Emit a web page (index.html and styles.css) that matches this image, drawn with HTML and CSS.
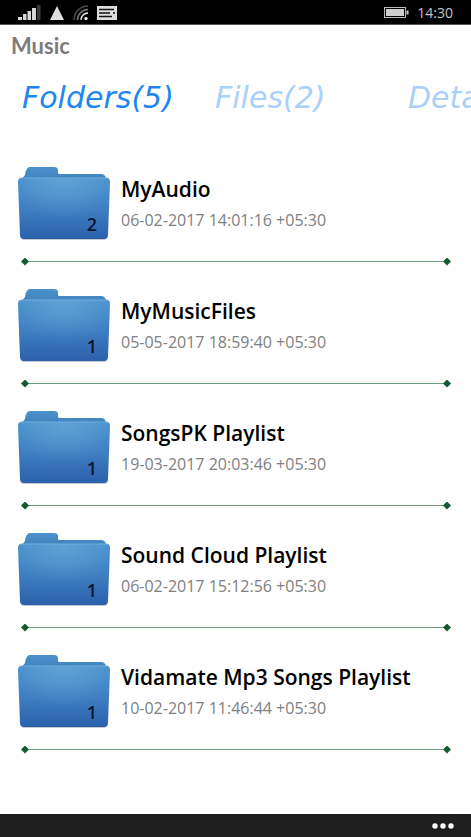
FILE: index.html
```html
<!DOCTYPE html>
<html lang="en">
<head>
<meta charset="utf-8">
<meta name="viewport" content="width=device-width, initial-scale=1">
<title>Music</title>
<link rel="stylesheet" href="styles.css">
</head>
<body>
<svg class="defs" aria-hidden="true">
  <defs>
    <linearGradient id="front" x1="0" y1="0" x2="0" y2="1">
      <stop offset="0" stop-color="#4a90cb"/>
      <stop offset="0.5" stop-color="#3f7fc2"/>
      <stop offset="1" stop-color="#2b60ac"/>
    </linearGradient>
    <radialGradient id="shine" cx="0.5" cy="0.05" r="0.6">
      <stop offset="0" stop-color="#6cb0de" stop-opacity="0.6"/>
      <stop offset="1" stop-color="#6cb0de" stop-opacity="0"/>
    </radialGradient>
    <linearGradient id="back" x1="0" y1="0" x2="0" y2="1">
      <stop offset="0" stop-color="#4c92cb"/>
      <stop offset="1" stop-color="#3a7ab6"/>
    </linearGradient>
  </defs>
  <symbol id="folder" viewBox="0 0 94 74">
    <rect x="4" y="66" width="86" height="8" rx="3" fill="#a9aeb8" opacity="0.7"/>
    <path d="M4 14 L8 9 Q9 1 13 1 H37 Q41 1 41 4 V7 Q41 8 43 8 H84 Q88 8 89 12 L91 20 H4Z" fill="url(#back)"/>
    <path d="M4 12 H90 Q93 12 93 16 L91 69 Q91 73 87 73 H7 Q3 73 3 69 L1 16 Q1 12 4 12Z" fill="url(#front)"/>
    <path d="M4 12 H90 Q93 12 93 16 L91 69 Q91 73 87 73 H7 Q3 73 3 69 L1 16 Q1 12 4 12Z" fill="url(#shine)"/>
    <path d="M2 13 Q3 12 5 12 H89 Q91 12 92 13" fill="none" stroke="#70b0dc"/>
  </symbol>
</svg>
<div class="status">
  <div class="status-icons">
    <svg width="23" height="16" viewBox="0 0 23 16" fill="#d6d6d6" aria-label="Signal"><path d="M0 12h4v3H0zM5 9h3.500v6H5zM9.500 6H13v9H9.500zM14 3h4v12h-4z"/><path d="M19 0h3.500v15H19z" fill="#3c3c3c"/></svg>
    <svg width="14" height="16" viewBox="0 0 14 16" aria-label="Data"><path d="M7 1l7 14H0z" fill="#e0e0e0"/></svg>
    <svg width="15" height="16" viewBox="0 0 15 16" fill="none" stroke-width="1.500" aria-label="Wi-Fi"><path d="M1 15A14 14 0 0 1 15 1" stroke="#4a4a4a"/><path d="M4.500 15A10.500 10.500 0 0 1 15 4.500" stroke="#777"/><path d="M8 15A7 7 0 0 1 15 8" stroke="#e8e8e8"/><circle cx="13" cy="13.500" r="1.600" fill="#fff"/></svg>
    <svg width="20" height="16" viewBox="0 0 20 16" aria-label="Message"><path d="M0 1h20v14H0z" fill="#dcdcdc"/><path d="M2 4.500h15M2 8h11M2 11.500h13M16 8h2" stroke="#111" stroke-width="1.500"/></svg>
  </div>
  <div class="status-right">
    <svg width="25" height="12" viewBox="0 0 25 12" aria-label="Battery"><rect x="0.500" y="0.500" width="21" height="10" fill="none" stroke="#bbb"/><path d="M2 2h18v7H2zM22.500 3.500h2v4h-2z" fill="#cfcfcf"/></svg>
    <time>14:30</time>
  </div>
</div>
<header>
  <h1>Music</h1>
  <nav class="tabs">
    <button class="tab active" type="button">Folders(5)</button>
    <button class="tab" type="button">Files(2)</button>
    <button class="tab" type="button">Details</button>
  </nav>
</header>
<main>
  <ul class="list">
    <li class="row">
      <div class="item"><div class="folder"><svg width="94" height="74"><use href="#folder"/></svg><span class="count">2</span></div>
      <div class="info"><h2>MyAudio</h2><p>06-02-2017 14:01:16 +05:30</p></div></div>
      <div class="divider"></div>
    </li>
    <li class="row">
      <div class="item"><div class="folder"><svg width="94" height="74"><use href="#folder"/></svg><span class="count">1</span></div>
      <div class="info"><h2>MyMusicFiles</h2><p>05-05-2017 18:59:40 +05:30</p></div></div>
      <div class="divider"></div>
    </li>
    <li class="row">
      <div class="item"><div class="folder"><svg width="94" height="74"><use href="#folder"/></svg><span class="count">1</span></div>
      <div class="info"><h2>SongsPK Playlist</h2><p>19-03-2017 20:03:46 +05:30</p></div></div>
      <div class="divider"></div>
    </li>
    <li class="row">
      <div class="item"><div class="folder"><svg width="94" height="74"><use href="#folder"/></svg><span class="count">1</span></div>
      <div class="info"><h2>Sound Cloud Playlist</h2><p>06-02-2017 15:12:56 +05:30</p></div></div>
      <div class="divider"></div>
    </li>
    <li class="row">
      <div class="item"><div class="folder"><svg width="94" height="74"><use href="#folder"/></svg><span class="count">1</span></div>
      <div class="info"><h2>Vidamate Mp3 Songs Playlist</h2><p>10-02-2017 11:46:44 +05:30</p></div></div>
      <div class="divider"></div>
    </li>
  </ul>
</main>
<footer>
  <button class="more" type="button" aria-label="More"><svg width="22" height="6" viewBox="0 0 22 6" fill="#fff"><circle cx="3" cy="3" r="2.700"/><circle cx="11" cy="3" r="2.700"/><circle cx="19" cy="3" r="2.700"/></svg></button>
</footer>
</body>
</html>
```
FILE: styles.css
```css
* { box-sizing: border-box; margin: 0; padding: 0; }
body {
  display: flex;
  flex-direction: column;
  min-height: 100vh;
  background: #fff;
  color: #000;
  font-family: "Segoe UI", "Open Sans", "Noto Sans", sans-serif;
}
svg { display: block; }
button { border: 0; background: none; font: inherit; color: inherit; }
.defs { position: absolute; width: 0; height: 0; }
.status {
  display: flex;
  justify-content: space-between;
  align-items: center;
  height: 25px;
  padding: 2px 18px 0;
  background: #000;
  border-bottom: 1px solid #555;
}
.status-icons { display: flex; gap: 9px; }
.status-right {
  display: flex;
  align-items: center;
  gap: 8px;
  color: #c4c4c4;
  font-size: 14px;
  line-height: 20px;
}
h1 {
  padding: 8px 11px 0;
  color: #7c7c7c;
  font-family: "Comic Sans MS", Lato, sans-serif;
  font-size: 22px;
  font-weight: 700;
  line-height: 26px;
}
.tabs {
  display: grid;
  grid-auto-flow: column;
  grid-auto-columns: 193px;
  padding: 19px 0 0 22px;
  overflow: hidden;
}
.tab {
  color: #a9d0f8;
  font-family: "Comic Sans MS", "DejaVu Sans", sans-serif;
  font-size: 30px;
  font-style: italic;
  font-weight: 400;
  line-height: 40px;
  text-align: left;
}
.tab.active { color: #1c86f2; }
main { flex: 1; padding-top: 32px; }
.list { list-style: none; }
.row { padding: 16px 0 5px; }
.item { display: flex; gap: 10px; padding-left: 17px; }
.folder { position: relative; }
.count {
  position: absolute;
  right: 14px;
  bottom: 4px;
  color: #06152c;
  font-size: 18px;
  font-weight: 600;
  line-height: 24px;
}
.info { padding-top: 8px; }
h2 { font-size: 21px; font-weight: 600; line-height: 30px; }
.info p { color: #808080; font-size: 16px; line-height: 32px; }
.divider {
  display: flex;
  align-items: center;
  justify-content: space-between;
  height: 11px;
  margin: 16px 20px 0 21px;
  background: linear-gradient(#6b9f80, #6b9f80) center / calc(100% - 6px) 1px no-repeat;
}
.divider::before, .divider::after {
  content: "";
  width: 8px;
  height: 8px;
  background: #125c30;
  clip-path: polygon(50% 0, 100% 50%, 50% 100%, 0 50%);
}
footer {
  display: flex;
  justify-content: flex-end;
  height: 23px;
  padding: 0 17px;
  background: #1f1f1f;
}
.more { display: flex; align-items: center; }
```
